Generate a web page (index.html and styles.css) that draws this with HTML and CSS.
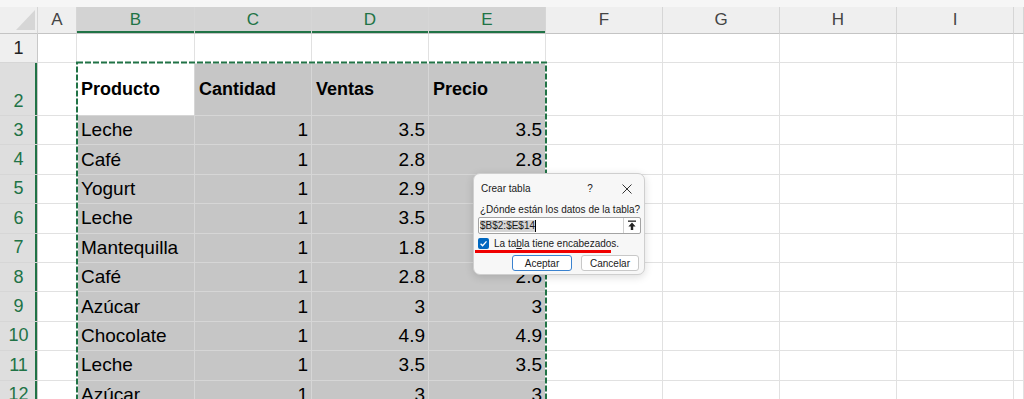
FILE: index.html
```html
<!DOCTYPE html>
<html lang="es">
<head>
  <meta charset="UTF-8">
  <title>Crear tabla</title>
  <link rel="stylesheet" href="styles.css">
</head>
<body>
  <div class="sheet">
    <div class="strip"></div>
    <table class="grid">
      <colgroup>
        <col class="w-hdr"><col class="w-a"><col class="w-b"><col class="w-std"><col class="w-std"><col class="w-std">
        <col class="w-std"><col class="w-std"><col class="w-std"><col class="w-std"><col class="w-end">
      </colgroup>
      <tr class="heads">
        <th class="corner"><svg width="38" height="26" viewBox="0 0 38 26"><polygon points="16,23 35,3 35,23" fill="#d6d6d6"/></svg></th>
        <th>A</th><th class="sel">B</th><th class="sel">C</th><th class="sel">D</th><th class="sel">E</th>
        <th>F</th><th>G</th><th>H</th><th>I</th><th></th>
      </tr>
      <tr class="r1">
        <th class="rh">1</th><td></td><td></td><td></td><td></td><td></td><td></td><td></td><td></td><td></td><td></td>
      </tr>
      <tr class="r2">
        <th class="rh sel low">2</th><td></td>
        <td class="head active">Producto</td><td class="head pick">Cantidad</td><td class="head pick">Ventas</td><td class="head pick">Precio</td>
        <td></td><td></td><td></td><td></td><td></td>
      </tr>
      <tr class="rd">
        <th class="rh sel">3</th><td></td><td class="pick">Leche</td><td class="pick n">1</td><td class="pick n">3.5</td><td class="pick n">3.5</td>
        <td></td><td></td><td></td><td></td><td></td>
      </tr>
      <tr class="rd">
        <th class="rh sel">4</th><td></td><td class="pick">Café</td><td class="pick n">1</td><td class="pick n">2.8</td><td class="pick n">2.8</td>
        <td></td><td></td><td></td><td></td><td></td>
      </tr>
      <tr class="rd">
        <th class="rh sel">5</th><td></td><td class="pick">Yogurt</td><td class="pick n">1</td><td class="pick n">2.9</td><td class="pick n">2.9</td>
        <td></td><td></td><td></td><td></td><td></td>
      </tr>
      <tr class="rd">
        <th class="rh sel">6</th><td></td><td class="pick">Leche</td><td class="pick n">1</td><td class="pick n">3.5</td><td class="pick n">3.5</td>
        <td></td><td></td><td></td><td></td><td></td>
      </tr>
      <tr class="rd">
        <th class="rh sel">7</th><td></td><td class="pick">Mantequilla</td><td class="pick n">1</td><td class="pick n">1.8</td><td class="pick n">1.8</td>
        <td></td><td></td><td></td><td></td><td></td>
      </tr>
      <tr class="rd">
        <th class="rh sel">8</th><td></td><td class="pick">Café</td><td class="pick n">1</td><td class="pick n">2.8</td><td class="pick n">2.8</td>
        <td></td><td></td><td></td><td></td><td></td>
      </tr>
      <tr class="rd">
        <th class="rh sel">9</th><td></td><td class="pick">Azúcar</td><td class="pick n">1</td><td class="pick n">3</td><td class="pick n">3</td>
        <td></td><td></td><td></td><td></td><td></td>
      </tr>
      <tr class="rd">
        <th class="rh sel">10</th><td></td><td class="pick">Chocolate</td><td class="pick n">1</td><td class="pick n">4.9</td><td class="pick n">4.9</td>
        <td></td><td></td><td></td><td></td><td></td>
      </tr>
      <tr class="rd">
        <th class="rh sel">11</th><td></td><td class="pick">Leche</td><td class="pick n">1</td><td class="pick n">3.5</td><td class="pick n">3.5</td>
        <td></td><td></td><td></td><td></td><td></td>
      </tr>
      <tr class="rd">
        <th class="rh sel">12</th><td></td><td class="pick">Azúcar</td><td class="pick n">1</td><td class="pick n">3</td><td class="pick n">3</td>
        <td></td><td></td><td></td><td></td><td></td>
      </tr>
    </table>

    <!-- copy marquee around B2:E14 -->
    <svg class="ants" width="472" height="340">
      <rect x="1" y="1.5" width="469" height="400" fill="none" stroke="#fff" stroke-width="2"/>
      <rect x="1" y="1.5" width="469" height="400" fill="none" stroke="#217346" stroke-width="2" stroke-dasharray="6 2"/>
    </svg>

    <div class="dialog">
      <div class="dlg-title">
        <span class="dlg-name">Crear tabla</span>
        <span class="dlg-help">?</span>
        <svg class="dlg-close" width="10" height="10" viewBox="0 0 10 10">
          <path d="M0.5 0.5 L9.5 9.5 M9.5 0.5 L0.5 9.5" stroke="#333" stroke-width="1" fill="none"/>
        </svg>
      </div>
      <div class="dlg-label">¿Dónde están los datos de la tabla?</div>
      <div class="range">
        <span class="range-text"><span class="hl">$B$2:$E$14</span><span class="caret"></span></span>
        <span class="range-btn">
          <svg width="10" height="11" viewBox="0 0 10 11">
            <rect x="1" y="0.5" width="8" height="1.3" fill="#222"/>
            <path d="M5 2.6 L1.4 6.6 H3.8 V10 H6.2 V6.6 H8.6 Z" fill="#222"/>
          </svg>
        </span>
      </div>
      <label class="check">
        <span class="box">
          <svg width="11" height="11" viewBox="0 0 11 11">
            <rect width="11" height="11" rx="2" fill="#0067c0"/>
            <path d="M2.6 5.8 L4.6 7.7 L8.5 3.4" stroke="#fff" stroke-width="1.3" fill="none"/>
          </svg>
        </span>
        <span class="check-text">La ta<u>b</u>la tiene encabezados.</span>
      </label>
      <div class="actions">
        <button class="btn ok">Aceptar</button>
        <button class="btn">Cancelar</button>
      </div>
    </div>

    <div class="mark"></div>
  </div>
</body>
</html>
```

FILE: styles.css
```css
body {
  margin: 0;
  background: #fff;
  font-family: "Liberation Sans", Arial, sans-serif;
  overflow: hidden;
}
.sheet {
  position: relative;
  width: 1024px;
  height: 399px;
  overflow: hidden;
}
.strip {
  height: 7px;
  background: #f6f6f6;
}
.grid {
  border-collapse: separate;
  border-spacing: 0;
  table-layout: fixed;
  width: 1024px;
}
.w-hdr { width: 38px; }
.w-a { width: 39px; }
.w-b { width: 118px; }
.w-std { width: 117px; }
.w-end { width: 10px; }

th, td {
  padding: 0 4px;
  overflow: hidden;
  white-space: nowrap;
  border-right: 1px solid #e1e1e1;
  border-bottom: 1px solid #e1e1e1;
}

/* column letters */
.heads { height: 26px; }
.heads th {
  padding: 0;
  background: #efefef;
  color: #444;
  font-weight: normal;
  font-size: 17px;
  text-align: center;
  border-right-color: #d6d6d6;
  border-bottom-color: #c4c4c4;
}
.heads .sel {
  background: #d3d3d3;
  color: #217346;
  box-shadow: inset 0 -2px #217346;
}
.corner svg { display: block; }

/* row numbers */
.rh {
  padding: 0;
  background: #efefef;
  color: #222;
  font-weight: normal;
  font-size: 18px;
  text-align: center;
  border-right-color: #c8c8c8;
  border-bottom-color: #d6d6d6;
}
.rh.sel {
  background: #dedede;
  color: #217346;
  box-shadow: inset -2px 0 #217346;
}
.rh.low {
  vertical-align: bottom;
  padding-bottom: 3px;
}

.r1 { height: 29px; }
.r2 { height: 53px; }
.rd { height: 29.4px; }

td {
  font-size: 19px;
  color: #000;
}
td.pick {
  background: #c6c6c6;
  border-color: #d6d6d6;
}
td.active {
  background: #fff;
  border-right-color: #d6d6d6;
  border-bottom-color: #d6d6d6;
}
td.head {
  font-weight: bold;
  font-size: 18px;
}
td.n {
  text-align: right;
  padding-right: 3px;
}

.ants {
  position: absolute;
  left: 76px;
  top: 61px;
}

/* Crear tabla dialog */
.dialog {
  position: absolute;
  left: 473px;
  top: 173px;
  width: 172px;
  height: 102px;
  box-sizing: border-box;
  padding: 0 3px 0 4px;
  background: #f7f7f7;
  border: 1px solid #cfcfcf;
  border-radius: 7px;
  box-shadow: 0 2px 8px rgba(0,0,0,0.14);
  font-size: 10px;
  color: #1a1a1a;
}
.dlg-title {
  height: 29px;
  display: flex;
  align-items: center;
}
.dlg-name {
  flex: 1;
  padding-left: 3px;
}
.dlg-help {
  width: 10px;
  text-align: center;
  margin-right: 27px;
}
.dlg-close {
  margin-right: 9px;
}
.dlg-label {
  line-height: 14px;
  padding-left: 2px;
}
.range {
  height: 17px;
  box-sizing: border-box;
  display: flex;
  background: #fff;
  border: 1px solid #a3a3a3;
  border-radius: 2px;
}
.range-text {
  flex: 1;
  display: flex;
  align-items: center;
  padding-left: 1px;
}
.hl {
  background: #d5d5d5;
  line-height: 12px;
}
.caret {
  width: 1px;
  height: 12px;
  background: #000;
}
.range-btn {
  width: 16px;
  border-left: 1px solid #d0d0d0;
  display: flex;
  align-items: center;
  justify-content: center;
}
.range-btn svg { display: block; }
.check {
  margin-top: 2px;
  height: 15px;
  display: flex;
  align-items: center;
  gap: 5px;
}
.box svg { display: block; }
.actions {
  margin-top: 4px;
  display: flex;
  justify-content: flex-end;
  gap: 9px;
  padding-right: 2px;
}
.btn {
  height: 16px;
  padding: 0;
  width: 58px;
  background: #fff;
  border: 1px solid #c8c8c8;
  border-radius: 3px;
  font-family: "Liberation Sans", Arial, sans-serif;
  font-size: 10px;
  color: #1a1a1a;
}
.btn.ok {
  width: 60px;
  border-color: #3a82cf;
}

.mark {
  position: absolute;
  left: 475px;
  top: 250px;
  width: 136px;
  height: 3px;
  background: #f00000;
}
```
